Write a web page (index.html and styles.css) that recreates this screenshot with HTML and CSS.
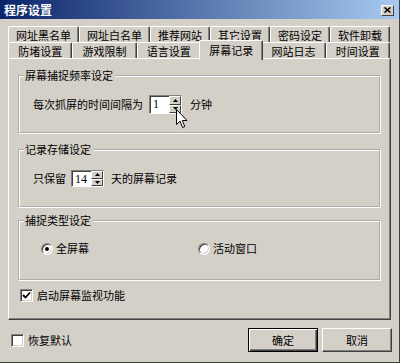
FILE: index.html
```html
<!DOCTYPE html>
<html>
<head>
<title>程序设置</title>
<meta content="width=device-width, initial-scale=1" name="viewport" />
<link rel="stylesheet" href="styles.css">
</head>

<body>
<div class='window'>
  <div class='titlebar'>
    <span class='title'>程序设置</span>
    <span class='close'>
      <svg width="7" height="6" viewBox="0 0 7 6"><path d="M0.5 0.5 L6.5 5.5 M6.5 0.5 L0.5 5.5" stroke="#000" stroke-width="1.6" fill="none"/></svg>
    </span>
  </div>

  <div class='tabs'>
    <div class='tab-row'>
      <div class='tab'>网址黑名单</div>
      <div class='tab'>网址白名单</div>
      <div class='tab'>推荐网站</div>
      <div class='tab'>其它设置</div>
      <div class='tab'>密码设定</div>
      <div class='tab'>软件卸载</div>
    </div>
    <div class='tab-row'>
      <div class='tab'>防堵设置</div>
      <div class='tab'>游戏限制</div>
      <div class='tab'>语言设置</div>
      <div class='tab active'>屏幕记录</div>
      <div class='tab'>网站日志</div>
      <div class='tab'>时间设置</div>
    </div>
  </div>

  <div class='panel'>
    <div class='group g-freq'>
      <div class='group-title'>屏幕捕捉频率设定</div>
      <div class='line'>
        <span>每次抓屏的时间间隔为</span>
        <span class='spin spin-big'>
          <span class='spin-field'>1</span>
          <span class='spin-btns'>
            <span class='spin-btn'><svg width="5" height="3" viewBox="0 0 5 3"><path d="M2.5 0 L5 3 L0 3 Z" fill="#000"/></svg></span>
            <span class='spin-btn'><svg width="5" height="3" viewBox="0 0 5 3"><path d="M0 0 L5 0 L2.5 3 Z" fill="#000"/></svg></span>
          </span>
        </span>
        <span class='after-spin'>分钟</span>
      </div>
    </div>

    <div class='group g-keep'>
      <div class='group-title'>记录存储设定</div>
      <div class='line'>
        <span>只保留</span>
        <span class='spin spin-small'>
          <span class='spin-field'>14</span>
          <span class='spin-btns'>
            <span class='spin-btn'><svg width="5" height="3" viewBox="0 0 5 3"><path d="M2.5 0 L5 3 L0 3 Z" fill="#000"/></svg></span>
            <span class='spin-btn'><svg width="5" height="3" viewBox="0 0 5 3"><path d="M0 0 L5 0 L2.5 3 Z" fill="#000"/></svg></span>
          </span>
        </span>
        <span class='after-spin'>天的屏幕记录</span>
      </div>
    </div>

    <div class='group g-type'>
      <div class='group-title'>捕捉类型设定</div>
      <div class='line options'>
        <label class='option'><span class='radio checked'></span>全屏幕</label>
        <label class='option'><span class='radio'></span>活动窗口</label>
      </div>
    </div>

    <label class='check-line'>
      <span class='check'><svg width="9" height="9" viewBox="0 0 9 9"><polyline points="1,4 3.5,6.5 8,1.5" stroke="#000" stroke-width="1.8" fill="none"/></svg></span>
      启动屏幕监视功能
    </label>
  </div>

  <div class='footer'>
    <label class='reset'><span class='check'></span>恢复默认</label>
    <div class='buttons'>
      <button class='btn btn-default'>确定</button>
      <button class='btn'>取消</button>
    </div>
  </div>

  <!-- mouse pointer over the spin arrow -->
  <svg class='cursor' width="12" height="20" viewBox="0 0 12 20">
    <path d="M0.5 0.5 L0.5 15.5 L4 12.2 L6.6 18.5 L8.8 17.6 L6.3 11.5 L11 11.5 Z" fill="#fff" stroke="#000" stroke-width="1"/>
  </svg>
</div>
</body>
</html>
```

FILE: styles.css
```css
* {
  box-sizing: border-box;
}
body {
  margin: 0;
  padding: 0;
  background: #d4d0c8;
  font-family: "Noto Sans CJK SC", sans-serif;
  font-size: 11px;
  color: #000;
}
.window {
  position: relative;
  width: 400px;
  height: 363px;
  background: #d4d0c8;
  border-right: 1px solid #404040;
  border-bottom: 1px solid #404040;
  overflow: hidden;
}
.titlebar {
  display: flex;
  align-items: center;
  justify-content: space-between;
  height: 19px;
  padding: 1px 5px 0 4px;
  background: linear-gradient(to right, #0a246a, #a6caf0);
}
.title {
  color: #fff;
  font-weight: bold;
  font-size: 12px;
  line-height: 14px;
}
.close {
  display: flex;
  align-items: center;
  justify-content: center;
  width: 13px;
  height: 11px;
  background: #d4d0c8;
  border: 1px solid;
  border-color: #fff #404040 #404040 #fff;
}

/* tabs */
.tabs {
  margin-top: 7px;
  padding: 0 9px 0 8px;
}
.tab-row {
  display: flex;
  height: 16px;
}
.tab {
  flex: 1 1 auto;
  text-align: center;
  white-space: nowrap;
  line-height: 13px;
  padding-top: 2px;
  background: #d4d0c8;
  border-top: 1px solid #fff;
  border-left: 1px solid #fff;
  border-right: 1px solid #404040;
  box-shadow: inset -1px 0 0 #808080;
  border-radius: 2px 2px 0 0;
}
.tab.active {
  position: relative;
  z-index: 2;
  margin: -2px -2px -2px -2px;
  padding-top: 3px;
  height: 20px;
}

/* panel */
.panel {
  display: flex;
  flex-direction: column;
  height: 262px;
  margin: 0 8px;
  padding-top: 16px;
  border: 1px solid;
  border-color: #fff #404040 #404040 #fff;
  box-shadow: inset -1px -1px 0 #808080;
}
.group {
  display: flex;
  flex-direction: column;
  align-items: flex-start;
  margin: 0 9px;
  padding: 0 13px;
  border: 2px groove #fff;
  line-height: 13px;
}
.group-title {
  margin: -8px 0 0 -9px;
  padding: 0 2px 0 1px;
  background: #d4d0c8;
}
.g-freq {
  padding-bottom: 18px;
}
.g-freq .line {
  margin-top: 13px;
}
.g-keep {
  margin-top: 15px;
  padding-bottom: 19px;
}
.g-keep .line {
  margin-top: 14px;
}
.g-type {
  margin-top: 12px;
  padding-bottom: 24px;
}
.g-type .line {
  margin-top: 15px;
}
.line {
  display: flex;
  align-items: center;
}
.options {
  padding-left: 8px;
}

/* spin boxes */
.spin {
  display: flex;
  width: 33px;
  margin-left: 6px;
  border: 1px solid;
  border-color: #808080 #fff #fff #808080;
  background: #fff;
}
.spin-big {
  height: 19px;
}
.spin-small {
  height: 17px;
  margin-left: 5px;
}
.spin-field {
  flex: 1;
  padding: 1px 0 0 2px;
  border-top: 1px solid #404040;
  border-left: 1px solid #404040;
  font-family: "Liberation Serif", serif;
  font-size: 12px;
  line-height: 13px;
}
.spin-btns {
  display: flex;
  flex-direction: column;
  width: 12px;
}
.spin-btn {
  flex: 1;
  display: flex;
  align-items: center;
  justify-content: center;
  background: #d4d0c8;
  border: 1px solid;
  border-color: #fff #404040 #404040 #fff;
}
.after-spin {
  margin-left: 8px;
}
.spin-small + .after-spin {
  margin-left: 7px;
}

/* radios and checks */
.option {
  display: flex;
  align-items: center;
  width: 157px;
}
.radio {
  position: relative;
  width: 12px;
  height: 12px;
  margin-right: 3px;
  border-radius: 50%;
  background: #fff;
  border: 1px solid;
  border-color: #808080 #fff #fff #808080;
  box-shadow: inset 1px 1px 0 #404040, inset -1px -1px 0 #d4d0c8;
}
.radio.checked::after {
  content: '';
  position: absolute;
  left: 3px;
  top: 3px;
  width: 4px;
  height: 4px;
  border-radius: 50%;
  background: #000;
}
.check {
  display: flex;
  align-items: center;
  justify-content: center;
  width: 13px;
  height: 13px;
  margin-right: 4px;
  background: #fff;
  border: 1px solid;
  border-color: #808080 #fff #fff #808080;
  box-shadow: inset 1px 1px 0 #404040, inset -1px -1px 0 #d4d0c8;
}
.check-line {
  display: flex;
  align-items: center;
  margin: 8px 0 0 11px;
  line-height: 13px;
}

/* footer */
.footer {
  display: flex;
  align-items: center;
  padding: 8px 7px 0 11px;
}
.reset {
  display: flex;
  align-items: center;
  line-height: 13px;
}
.buttons {
  display: flex;
  gap: 4px;
  margin-left: auto;
}
.btn {
  width: 70px;
  height: 24px;
  padding: 0;
  font-family: "Noto Sans CJK SC", sans-serif;
  font-size: 11px;
  color: #000;
  background: #d4d0c8;
  border: 1px solid;
  border-color: #fff #404040 #404040 #fff;
  box-shadow: inset -1px -1px 0 #808080;
}
.btn-default {
  border-color: #000;
  box-shadow: inset 1px 1px 0 #fff, inset -1px -1px 0 #404040, inset -2px -2px 0 #808080;
}
.cursor {
  position: absolute;
  left: 176px;
  top: 109px;
}
```
